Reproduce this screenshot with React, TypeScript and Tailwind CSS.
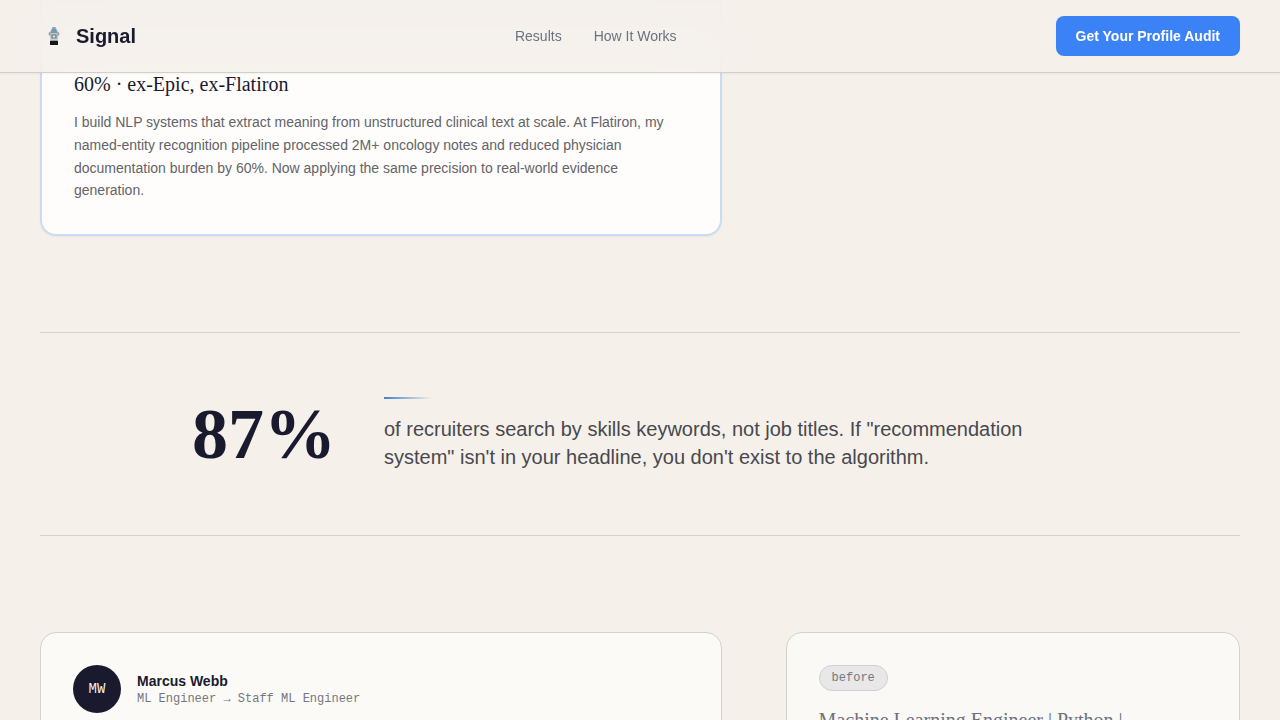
function LogoMark() {
  return (
    <svg className="size-7" viewBox="0 0 28 28" aria-hidden="true">
      <path d="M8.800 11 12 6.500h4L19.200 11v2.500L18 14.500V19h-8v-4.500l-1.200-1z" fill="#bcc6c8" />
      <path d="M12.500 5h3l.8 2.500h-4.600z" fill="#92a3ac" />
      <path d="M12 7h4l1.500 4h-7z" fill="#6f9db8" />
      <path d="M8.800 10.500h1.700v2.500H8.800zM17.500 10.500h1.700v2.500h-1.700z" fill="#8fa0a6" />
      <rect x="11.500" y="12.500" width="5" height="4" fill="#687680" />
      <rect x="12.700" y="13.500" width="2.600" height="2" fill="#e4ecee" />
      <rect x="10" y="16.800" width="8" height="2" fill="#cdd0cd" />
      <rect x="10" y="18.700" width="8" height="4.300" rx="0.600" fill="#15161c" />
    </svg>
  );
}

function Header() {
  return (
    <header className="sticky top-0 z-10 border-b border-[#d2cecb] bg-[#f5f0ea]/85 shadow-xs backdrop-blur-xl">
      <div className="flex items-center justify-between px-10 py-4">
        <a href="#" className="flex items-center gap-2 text-xl font-bold text-[#1a1a2e]">
          <LogoMark />
          Signal
        </a>
        <nav className="flex gap-8 text-sm text-[#6b7280]">
          <a href="#results">Results</a>
          <a href="#how-it-works">How It Works</a>
        </nav>
        <button type="button" className="h-10 rounded-lg bg-[#3b82f6] px-5 text-sm font-bold text-white">
          Get Your Profile Audit
        </button>
      </div>
    </header>
  );
}

const serif = "font-['Liberation_Serif',serif]";
const mono = "font-['Liberation_Mono',monospace]";

export default function App() {
  return (
    <div className="h-screen overflow-hidden bg-[#f5f0ea] font-['Liberation_Sans',sans-serif] text-[#1a1a2e]">
      <Header />
      <main className="-mt-[73px] px-10">
        <section className="grid grid-cols-[3fr_2fr] gap-16 pb-24">
          <article className="rounded-b-2xl border-2 border-t-0 border-[#c9dcf3] bg-linear-to-b from-[#ebeaee] to-[#fefdfb] to-30% px-8 pt-[71px] pb-8 shadow-xs">
            <h3 className={`mb-3.5 text-xl leading-[26px] ${serif}`}>60% · ex-Epic, ex-Flatiron</h3>
            <p className="text-sm leading-relaxed text-[#636369]">
              I build NLP systems that extract meaning from unstructured clinical text at scale. At Flatiron, my
              named-entity recognition pipeline processed 2M+ oncology notes and reduced physician documentation
              burden by 60%. Now applying the same precision to real-world evidence generation.
            </p>
          </article>
        </section>

        <section className="border-y border-[#d5d2ce] py-16">
          <div className="mx-auto flex max-w-4xl items-center gap-12">
            <div className={`text-7xl leading-none font-bold ${serif}`}>87%</div>
            <div className="flex-1">
              <div className="mb-4 h-0.5 w-12 bg-linear-to-r from-[#4382cc] to-transparent" />
              <p className="text-xl leading-7 text-[#48484f]">
                of recruiters search by skills keywords, not job titles. If "recommendation system" isn't in your
                headline, you don't exist to the algorithm.
              </p>
            </div>
          </div>
        </section>

        <section id="results" className="grid grid-cols-[3fr_2fr] gap-16 pt-24">
          <article className="rounded-2xl border border-[#d3d1ce] bg-[#fbfaf7] p-8">
            <div className="flex items-center gap-4">
              <div className={`flex size-12 items-center justify-center rounded-full bg-[#1a1a2e] text-sm text-[#f5f0ea] ${mono}`}>
                MW
              </div>
              <div>
                <h3 className="text-sm leading-5 font-bold">Marcus Webb</h3>
                <p className={`text-xs leading-4 text-[#737780] ${mono}`}>ML Engineer → Staff ML Engineer</p>
              </div>
            </div>
          </article>
          <article className="rounded-2xl border border-[#d3d1ce] bg-[#faf9f5] p-8">
            <div className={`mb-4 w-fit rounded-full border border-[#cfd0d1] bg-[#e7e8e7] px-3 py-1 text-xs leading-4 text-[#737780] ${mono}`}>
              before
            </div>
            <h3 className={`text-xl leading-[26px] text-[#6b7280] ${serif}`}>Machine Learning Engineer | Python |</h3>
          </article>
        </section>
      </main>
    </div>
  );
}
